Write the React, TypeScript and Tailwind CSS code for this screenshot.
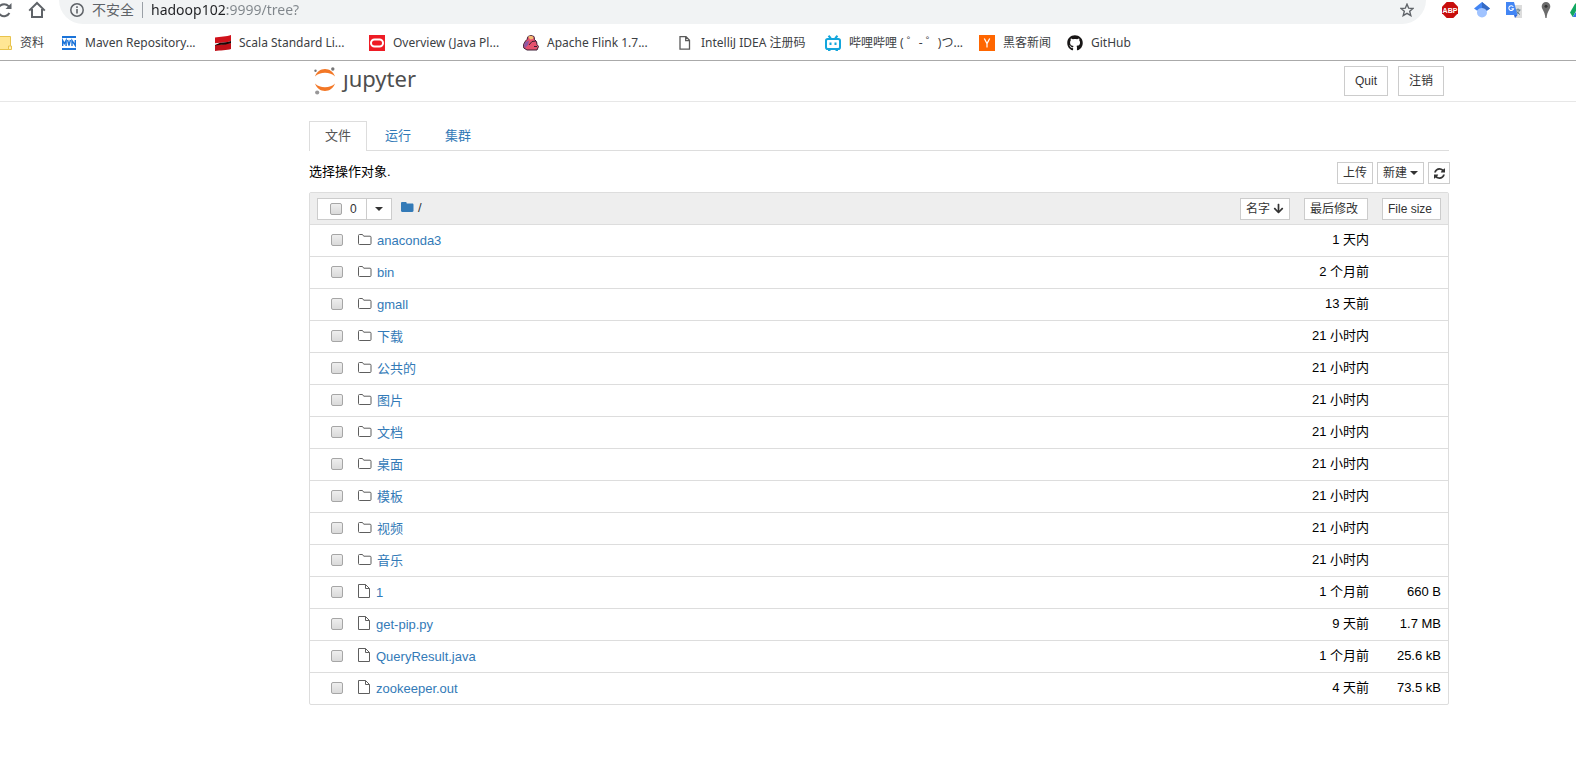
import { useState } from "react";
import type { ReactNode } from "react";
import { FaArrowDown, FaGithub } from "react-icons/fa";

type Entry = {
  name: string;
  kind: "folder" | "file";
  modified: string;
  size?: string;
};

const entries: Entry[] = [
  { name: "anaconda3", kind: "folder", modified: "1 天内" },
  { name: "bin", kind: "folder", modified: "2 个月前" },
  { name: "gmall", kind: "folder", modified: "13 天前" },
  { name: "下载", kind: "folder", modified: "21 小时内" },
  { name: "公共的", kind: "folder", modified: "21 小时内" },
  { name: "图片", kind: "folder", modified: "21 小时内" },
  { name: "文档", kind: "folder", modified: "21 小时内" },
  { name: "桌面", kind: "folder", modified: "21 小时内" },
  { name: "模板", kind: "folder", modified: "21 小时内" },
  { name: "视频", kind: "folder", modified: "21 小时内" },
  { name: "音乐", kind: "folder", modified: "21 小时内" },
  { name: "1", kind: "file", modified: "1 个月前", size: "660 B" },
  { name: "get-pip.py", kind: "file", modified: "9 天前", size: "1.7 MB" },
  { name: "QueryResult.java", kind: "file", modified: "1 个月前", size: "25.6 kB" },
  { name: "zookeeper.out", kind: "file", modified: "4 天前", size: "73.5 kB" },
];

const button =
  "flex items-center border border-[#ccc] bg-white text-xs text-[#333] hover:bg-[#e6e6e6]";

const checkbox =
  "block size-3 appearance-none rounded-xs border border-[#a6a6a6] bg-linear-to-b from-[#eee] to-[#dadada] checked:from-[#666] checked:to-[#555]";

/* ---------- Browser icons ---------- */

function ReloadIcon() {
  return (
    <svg width="16" height="16" viewBox="0 0 16 16" fill="none" stroke="#5f6368" strokeWidth="2">
      <path d="M13.4 11A6 6 0 1 1 12.6 4.2L14 5.6" />
      <path d="M15.5 1v6h-6z" fill="#5f6368" stroke="none" />
    </svg>
  );
}

function HomeIcon() {
  return (
    <svg width="18" height="18" viewBox="0 0 18 18" fill="none" stroke="#5f6368" strokeWidth="2">
      <path d="M1.2 9.6 9 2l7.8 7.6M4 8v8h10V8" />
    </svg>
  );
}

function InfoIcon() {
  return (
    <svg width="14" height="14" viewBox="0 0 14 14" fill="none" stroke="#5f6368">
      <circle cx="7" cy="7" r="6.2" strokeWidth="1.5" />
      <path d="M7 6v4.500M7 3.300v1.600" strokeWidth="1.6" />
    </svg>
  );
}

function StarIcon() {
  return (
    <svg width="14" height="14" viewBox="0 0 14 14" fill="none" stroke="#5f6368" strokeWidth="1.4">
      <path d="m7 1.200 1.700 4 4.300.3-3.300 2.800 1.100 4.300L7 10.300l-3.800 2.300 1.100-4.300L1 5.500l4.300-.3z" />
    </svg>
  );
}

function AdblockIcon() {
  return (
    <svg width="16" height="16" viewBox="0 0 16 16">
      <path d="M4.700 0h6.600L16 4.700v6.600L11.300 16H4.700L0 11.300V4.700z" fill="#c70d0c" />
      <text x="8" y="10.5" textAnchor="middle" fontFamily="Liberation Sans, sans-serif" fontSize="7" fontWeight="bold" fill="#fff">
        ABP
      </text>
    </svg>
  );
}

function ScholarIcon() {
  return (
    <svg width="16" height="16" viewBox="0 0 16 16">
      <circle cx="8" cy="10.5" r="5" fill="#a0c3ff" />
      <path d="M8 0 0 6.500l3.200 2.300C4 7 5.800 5.900 8 5.900s4 1.100 4.800 2.900L16 6.500z" fill="#4285f4" />
      <path d="M8 0v5.900c2.200 0 4 1.100 4.800 2.900L16 6.500z" fill="#356ac3" />
    </svg>
  );
}

function TranslateIcon() {
  return (
    <svg width="16" height="16" viewBox="0 0 16 16">
      <path d="M6 3h10v13H9z" fill="#dcdcdc" />
      <path d="M9.500 8h5M12 6.500V8M13.500 8c-.5 2-2 3.500-3.500 4.500M10.500 9c.7 1.500 2 2.800 3.500 3.500" stroke="#607d8b" fill="none" />
      <path d="M0 0h8l3.500 13H0z" fill="#4285f4" />
      <path d="M7.300 4.800A2.400 2.400 0 1 0 7.600 6.700H5.400" stroke="#fff" strokeWidth="1.1" fill="none" />
      <path d="M8 13h3.500L9 16z" fill="#3367d6" />
    </svg>
  );
}

function PinIcon() {
  return (
    <svg width="16" height="16" viewBox="0 0 16 16">
      <path d="M8 0a4.300 4.300 0 0 1 4.300 4.300C12.300 7.500 9.200 9 8.600 16H7.400C6.800 9 3.700 7.500 3.700 4.300A4.300 4.300 0 0 1 8 0z" fill="#6b6b6b" />
      <circle cx="8" cy="4.3" r="1.5" fill="#333" />
    </svg>
  );
}

function DriveIcon() {
  return (
    <svg width="16" height="16" viewBox="0 0 16 16">
      <path d="M5.500 1 0 10.500 2.700 15 8 5.500z" fill="#11a861" />
      <path d="M2.700 15 5.400 10.500H16L13.300 15z" fill="#3777e3" />
      <path d="M5.500 1h5l5.500 9.500h-5.400z" fill="#ffcf63" />
    </svg>
  );
}

/* ---------- Bookmark icons ---------- */

function FolderBookmarkIcon() {
  return (
    <svg width="16" height="16" viewBox="0 0 16 16">
      <path d="M0 1.500h14.500v13H0z" fill="#ffe694" stroke="#e8c34c" />
      <path d="M12.500 11h3v3.500h-3z" fill="#fff0b8" stroke="#e8c34c" />
    </svg>
  );
}

function MavenIcon() {
  return (
    <svg width="16" height="16" viewBox="0 0 16 16">
      <path d="M1 1h14v2H1zM1 13h14v2H1z" fill="#1a73d9" />
      <path
        d="M1.700 11V5.500L3.400 8.500 5.100 5.500V11M6.600 5 8 10.500 9.400 5M11 11V5.500L14.300 10.500V5"
        fill="none"
        stroke="#1a73d9"
        strokeWidth="1.4"
      />
    </svg>
  );
}

function ScalaIcon() {
  return (
    <svg width="16" height="16" viewBox="0 0 16 16">
      <path d="M0 2.500C5 1.700 12 1.500 16 0v6C12 7.500 5 7.700 0 8.500z" fill="#d0121b" />
      <path d="M0 10C5 9.200 12 9.500 16 8v6c-4 1.500-11 1.200-16 2z" fill="#c01018" />
      <path d="M0 8.500C5 7.700 12 7.500 16 6v2C12 10 5 9.500 0 10.500z" fill="#1a0606" />
      <path d="M0 8.300 5 7.800 0 10z" fill="#fff" />
    </svg>
  );
}

function OracleIcon() {
  return (
    <svg width="16" height="16" viewBox="0 0 16 16">
      <path d="M0 0h16v16H0z" fill="#ee1c25" />
      <rect x="2" y="4.5" width="12" height="7" rx="3.5" fill="none" stroke="#fff" strokeWidth="2" />
    </svg>
  );
}

function FlinkIcon() {
  return (
    <svg width="16" height="16" viewBox="0 0 16 16">
      <path d="M4 4.500 5 1.500 8 .5l3 1 .5 3 2 2 .5 3 1.500 2-1.500 3.500H4L.8 13 .5 9.500 2.500 6z" fill="#e6526f" stroke="#3b1d35" />
      <path d="M5 1.500 8 .8l2.500 1L10 4 7 4.500z" fill="#f3bd74" />
      <path d="M2.500 7 6 5.500 5 10l-3 3-1-3z" fill="#8c58a4" />
      <path d="m6 10 3-3.500L13 6M11 11.500h3" fill="none" stroke="#3b1d35" />
    </svg>
  );
}

function PageIcon() {
  return (
    <svg width="16" height="16" viewBox="0 0 16 16" fill="none" stroke="#5a5a5a" strokeWidth="1.3">
      <path d="M3 1.700h6l3.500 3.500v9H3zM8.700 1.700v4h3.800" />
    </svg>
  );
}

function BilibiliIcon() {
  return (
    <svg width="16" height="16" viewBox="0 0 16 16" fill="none" stroke="#13a6dc" strokeWidth="2">
      <path d="m3.500.8 2.300 2.500M12.500.8l-2.300 2.500" />
      <rect x="1" y="4" width="14" height="10" rx="1.8" />
      <path d="M5.500 7.500v2.500M10.500 7.500v2.500M3 15h2.500M10.500 15H13" />
    </svg>
  );
}

function HackerNewsIcon() {
  return (
    <svg width="16" height="16" viewBox="0 0 16 16">
      <path d="M0 0h16v16H0z" fill="#f60" />
      <path d="M5.300 3.500 8 8.600l2.700-5.100M8 8.300v4.200" fill="none" stroke="#fff" strokeWidth="1.2" />
    </svg>
  );
}

/* ---------- Notebook icons ---------- */

function JupyterMark() {
  return (
    <svg width="24" height="30" viewBox="0 0 24 30">
      <path d="M2 11.500C3.800 6.700 7.500 4 12 4s8.200 2.700 10 7.500C19.500 8.900 16 7.700 12 7.700S4.500 8.900 2 11.500z" fill="#f37726" />
      <path d="M2 18.500c1.800 4.800 5.500 7.500 10 7.500s8.200-2.700 10-7.500c-2.500 2.600-6 3.800-10 3.800S4.500 21.100 2 18.500z" fill="#f37726" />
      <circle cx="19.800" cy="4" r="1.7" fill="#767677" />
      <circle cx="2.500" cy="5.800" r="1.2" fill="#767677" />
      <circle cx="4.200" cy="27.500" r="2.1" fill="#989798" />
    </svg>
  );
}

function FolderOutline() {
  return (
    <svg width="14" height="12" viewBox="0 0 14 12" fill="none" stroke="#5e5e5e">
      <path d="M1.500.5h3l1.200 1.700h6.300a1 1 0 0 1 1 1v6.300a1 1 0 0 1-1 1h-10.500a1 1 0 0 1-1-1v-8a1 1 0 0 1 1-1z" />
    </svg>
  );
}

function FolderSolid() {
  return (
    <svg width="13" height="11" viewBox="0 0 13 11" fill="#337ab7">
      <path d="M1.200 0h3.300c.7 0 1.200.5 1.200 1.200v.4h5.600c.7 0 1.200.5 1.200 1.200v6c0 .7-.5 1.200-1.200 1.200H1.200C.5 10 0 9.500 0 8.800V1.200C0 .5.5 0 1.200 0z" />
    </svg>
  );
}

function FileOutline() {
  return (
    <svg width="13" height="14" viewBox="0 0 13 14" fill="none" stroke="#5e5e5e">
      <path d="M.5.5h7l4 4v9H.5zM7.500.5v4h4" />
    </svg>
  );
}

function RefreshIcon() {
  return (
    <svg width="11" height="11" viewBox="0 0 1536 1536" fill="#333">
      <path d="M1511 928q0 5-1 7-64 268-268 434.500T764 1536q-146 0-282.500-55T238 1324l-129 129q-19 19-45 19t-45-19-19-45V960q0-26 19-45t45-19h448q26 0 45 19t19 45-19 45l-137 137q71 66 161 102t187 36q134 0 250-65t186-179q11-17 53-117 8-23 30-23h192q13 0 22.500 9.500t9.500 22.500zm25-800v448q0 26-19 45t-45 19h-448q-26 0-45-19t-19-45 19-45l138-138Q969 256 768 256q-134 0-250 65T332 500q-11 17-53 117-8 23-30 23H50q-13 0-22.500-9.500T18 608v-7q65-268 270-434.500T768 0q146 0 284 55.500T1297 212l130-129q19-19 45-19t45 19 19 45z" />
    </svg>
  );
}

function Caret() {
  return (
    <svg width="8" height="4" viewBox="0 0 8 4" fill="#333">
      <path d="M0 0h8L4 4z" />
    </svg>
  );
}

/* ---------- Browser bars ---------- */

function Bookmark({ icon, label, className }: { icon: ReactNode; label: string; className: string }) {
  return (
    <a href="#" className={`flex shrink-0 items-center gap-2 whitespace-nowrap ${className}`}>
      <span className="shrink-0">{icon}</span>
      {label}
    </a>
  );
}

function BrowserBar() {
  return (
    <div className="border-b border-[#aaa] bg-white font-['Noto_Sans','Noto_Sans_CJK_SC',sans-serif]">
      <div className="flex h-6 items-start overflow-hidden">
        <div className="flex w-[59px] shrink-0 gap-4 pt-px">
          <button aria-label="重新加载" className="-ml-1">
            <ReloadIcon />
          </button>
          <button aria-label="主页">
            <HomeIcon />
          </button>
        </div>
        <div className="flex h-6 grow items-center rounded-b-3xl bg-[#f1f3f4] pr-3 pb-1 pl-[11px] text-sm text-[#5f6368]">
          <InfoIcon />
          <span className="ml-2">不安全</span>
          <span className="mx-2 h-4 w-px bg-[#9aa0a6]" />
          {/* host is dark, port and path are grey */}
          <input
            aria-label="地址"
            defaultValue="hadoop102:9999/tree?"
            className="grow bg-linear-to-r from-[#202124] from-[76px] to-[#80868b] to-[76px] bg-clip-text text-transparent caret-black outline-none"
          />
          <button aria-label="收藏">
            <StarIcon />
          </button>
        </div>
        <div className="-mr-2.5 flex shrink-0 gap-4 pt-0.5 pl-4">
          <AdblockIcon />
          <ScholarIcon />
          <TranslateIcon />
          <PinIcon />
          <DriveIcon />
        </div>
      </div>
      <nav className="flex h-9 items-center overflow-hidden pt-px text-xs text-[#3c4043]">
        <Bookmark icon={<FolderBookmarkIcon />} label="资料" className="-ml-1 w-[65px]" />
        <Bookmark icon={<MavenIcon />} label="Maven Repository..." className="w-[154px]" />
        <Bookmark icon={<ScalaIcon />} label="Scala Standard Li..." className="w-[154px]" />
        <Bookmark icon={<OracleIcon />} label="Overview (Java Pl..." className="w-[154px]" />
        <Bookmark icon={<FlinkIcon />} label="Apache Flink 1.7..." className="w-[154px]" />
        <Bookmark icon={<PageIcon />} label="IntelliJ IDEA 注册码" className="w-[148px]" />
        <Bookmark icon={<BilibiliIcon />} label="哔哩哔哩 ( ゜- ゜)つ..." className="w-[154px]" />
        <Bookmark icon={<HackerNewsIcon />} label="黑客新闻" className="w-[88px]" />
        <Bookmark icon={<FaGithub size={16} color="#181616" />} label="GitHub" className="w-[88px]" />
      </nav>
    </div>
  );
}

/* ---------- Notebook page ---------- */

function Header() {
  return (
    <header className="flex h-[41px] items-start justify-between border-b border-[#e7e7e7] pr-[132px] pl-[313px]">
      <a href="#" className="flex pt-1">
        <JupyterMark />
        <span className="ml-1.5 font-['Noto_Sans',sans-serif] text-[22px] leading-[26px] text-[#4e4e4e]">ȷupyter</span>
      </a>
      <div className="flex gap-[10px] pt-[5px]">
        <button className={`${button} h-[30px] px-[10px]`}>Quit</button>
        <button className={`${button} h-[30px] px-[10px]`}>注销</button>
      </div>
    </header>
  );
}

function Tabs() {
  return (
    <nav className="flex h-[30px] gap-0.5 border-b border-[#ddd] leading-5">
      <a href="#" className="-mb-px border border-b-0 border-[#ddd] bg-white px-[15px] pt-1 text-[#555]">
        文件
      </a>
      <a href="#" className="px-4 pt-[5px] text-[#337ab7]">运行</a>
      <a href="#" className="px-4 pt-[5px] text-[#337ab7]">集群</a>
    </nav>
  );
}

function ListHeader({ count, allSelected, onToggleAll }: { count: number; allSelected: boolean; onToggleAll: () => void }) {
  return (
    <div className="flex h-[31px] items-center bg-[#eee] px-[7px]">
      <label className={`${button} h-[22px] w-[50px] gap-2 pl-3`}>
        <input type="checkbox" aria-label="全选" className={checkbox} checked={allSelected} onChange={onToggleAll} />
        {count}
      </label>
      <button aria-label="选择类型" className={`${button} -ml-px h-[22px] w-[26px] justify-center`}>
        <Caret />
      </button>
      <div className="ml-[9px] flex grow items-center gap-1 pb-0.5 text-[#333]">
        <a href="#" aria-label="主目录">
          <FolderSolid />
        </a>
        /
      </div>
      <div className="flex gap-[14px]">
        <button className={`${button} h-[22px] w-[50px] gap-[3px] px-[5px] whitespace-nowrap`}>
          名字
          <FaArrowDown size={11} className="shrink-0" />
        </button>
        <button className={`${button} h-[22px] w-[64px] px-[5px]`}>最后修改</button>
        <button className={`${button} h-[22px] w-[59px] px-[5px] whitespace-nowrap`}>File size</button>
      </div>
    </div>
  );
}

export default function App() {
  const [selected, setSelected] = useState<string[]>([]);
  const allSelected = selected.length === entries.length;

  const toggle = (name: string) =>
    setSelected((prev) => (prev.includes(name) ? prev.filter((n) => n !== name) : [...prev, name]));

  return (
    <div className="min-h-screen bg-white font-['Liberation_Sans','Noto_Sans_CJK_SC',sans-serif] text-[13px] text-black">
      <BrowserBar />
      <Header />
      <main className="pt-[19px] pr-[127px] pb-16 pl-[309px]">
        <Tabs />
        <div className="flex h-[41px] items-start justify-between pt-[11px]">
          <p className="leading-5">选择操作对象.</p>
          <div className="-mr-px flex gap-1">
            <button className={`${button} h-[22px] px-[5px]`}>上传</button>
            <button className={`${button} h-[22px] gap-[3px] px-[5px]`}>
              新建
              <Caret />
            </button>
            <button aria-label="刷新" className={`${button} h-[22px] w-[22px] justify-center`}>
              <RefreshIcon />
            </button>
          </div>
        </div>

        <div className="rounded-xs border border-[#ddd]">
          <ListHeader
            count={selected.length}
            allSelected={allSelected}
            onToggleAll={() => setSelected(allSelected ? [] : entries.map((e) => e.name))}
          />
          <table className="w-full table-fixed border-separate border-spacing-0">
            <tbody>
              {entries.map(({ name, kind, modified, size }) => (
                <tr key={name} className="h-8 *:border-t *:border-[#ddd] hover:bg-[#f5f5f5]">
                  <td className="w-[48px] pb-px pl-[21px]">
                    <input
                      type="checkbox"
                      aria-label={name}
                      className={checkbox}
                      checked={selected.includes(name)}
                      onChange={() => toggle(name)}
                    />
                  </td>
                  <td>
                    <a href="#" className="flex items-center gap-[5px] text-[#337ab7]">
                      <span className={kind === "folder" ? "pb-0.5" : "pb-1"}>
                        {kind === "folder" ? <FolderOutline /> : <FileOutline />}
                      </span>
                      {name}
                    </a>
                  </td>
                  <td className="w-[120px] pb-0.5 text-right">{modified}</td>
                  <td className="w-[79px] pr-[7px] pb-0.5 text-right">{size}</td>
                </tr>
              ))}
            </tbody>
          </table>
        </div>
      </main>
    </div>
  );
}
